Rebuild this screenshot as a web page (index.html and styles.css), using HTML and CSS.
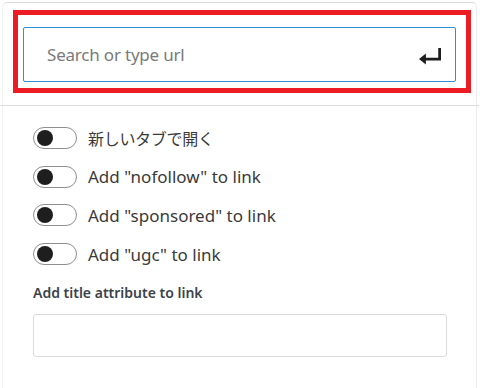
FILE: index.html
```html
<!DOCTYPE html>
<html lang="ja">
<head>
<meta charset="utf-8">
<title>Link settings</title>
<link rel="stylesheet" href="styles.css">
</head>
<body>
<div class="panel">
  <div class="search">
    <div class="url-input">
      <span class="placeholder">Search or type url</span>
      <svg class="enter" viewBox="2 4 16 12" width="22" height="16.5" aria-hidden="true"><path d="M16 4h2v9H7v3l-5-4 5-4v3h9V4z"/></svg>
    </div>
  </div>
  <div class="separator"></div>
  <div class="settings">
    <div class="toggles">
      <div class="row"><span class="toggle"><span class="thumb"></span></span><span class="label label-ja">新しいタブで開く</span></div>
      <div class="row"><span class="toggle"><span class="thumb"></span></span><span class="label">Add "nofollow" to link</span></div>
      <div class="row"><span class="toggle"><span class="thumb"></span></span><span class="label">Add "sponsored" to link</span></div>
      <div class="row"><span class="toggle"><span class="thumb"></span></span><span class="label">Add "ugc" to link</span></div>
    </div>
    <div class="field-label">Add title attribute to link</div>
    <div class="text-input"></div>
  </div>
</div>
<div class="highlight"></div>
</body>
</html>
```
FILE: styles.css
```css
html, body {
  margin: 0;
  padding: 0;
  background: #ffffff;
  height: 388px;
  overflow: hidden;
}
body {
  font-family: "Noto Sans", "Noto Sans CJK JP", sans-serif;
  color: #2c2c2c;
  position: relative;
}
.panel {
  margin: 2px 3px 0 2px;
  border: 1px solid #dcdcdc;
  border-bottom: none;
  border-left-color: #f2f2f2;
  border-right-color: #ececec;
  border-radius: 5px 5px 0 0;
  height: 400px;
  box-sizing: border-box;
}
.search {
  padding: 24px 20px 23px 20px;
}
.url-input {
  height: 55px;
  box-sizing: border-box;
  border: 1px solid #2f8fd0;
  border-radius: 2px;
  display: flex;
  align-items: center;
  padding: 0 14px 0 23px;
}
.placeholder {
  flex: 1;
  font-size: 17px;
  color: #7a7a7a;
  letter-spacing: -0.2px;
}
.enter {
  fill: #1e1e1e;
  margin-top: 4px;
}
.separator {
  height: 1px;
  background: #dddddd;
  margin: 0 -3px 0 -3px;
}
.settings {
  padding: 20px 0 0 30px;
  display: flex;
  flex-direction: column;
}
.toggles {
  display: flex;
  flex-direction: column;
  gap: 14.7px;
}
.row {
  display: flex;
  align-items: center;
  height: 24px;
}
.toggle {
  width: 44px;
  height: 22px;
  box-sizing: border-box;
  border: 1px solid #8f8f8f;
  border-radius: 11px;
  display: flex;
  align-items: center;
  padding-left: 3px;
  margin-right: 11px;
  flex: none;
}
.thumb {
  width: 16px;
  height: 16px;
  border-radius: 50%;
  background: #1e1e1e;
}
.label {
  font-size: 17px;
  color: #3a3a3a;
}
.label-ja {
  font-size: 16px;
  letter-spacing: -0.3px;
}
.field-label {
  margin-top: 17px;
  font-size: 14px;
  font-weight: 600;
  line-height: 20px;
  color: #3c434a;
}
.text-input {
  margin-top: 11px;
  width: 414px;
  height: 43px;
  box-sizing: border-box;
  border: 1px solid #dcdcdc;
  border-radius: 3px;
}
.highlight {
  position: absolute;
  left: 13px;
  top: 10px;
  width: 458px;
  height: 83px;
  box-sizing: border-box;
  border: 5px solid #ec1c24;
}
```
